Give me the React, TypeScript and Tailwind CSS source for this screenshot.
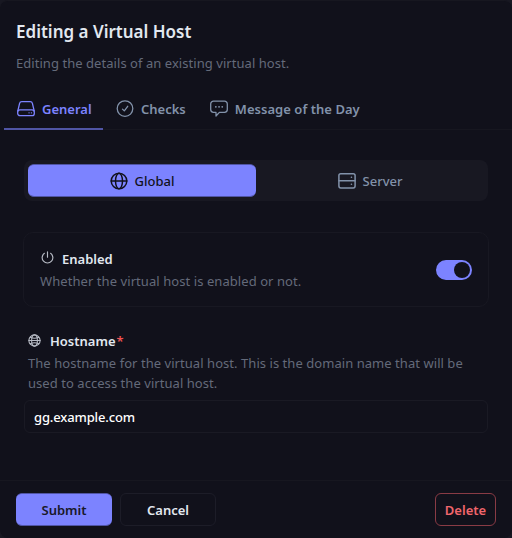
import { useState, type ReactNode } from "react";

type IconProps = { className?: string };

function Svg({ className = "", children, sw = 1.2 }: { className?: string; children: ReactNode; sw?: number }) {
  return (
    <svg viewBox="0 0 18 18" fill="none" stroke="currentColor" strokeWidth={sw} strokeLinecap="round" strokeLinejoin="round" className={`shrink-0 ${className}`}>
      {children}
    </svg>
  );
}

const DriveIcon = ({ className }: IconProps) => (
  <Svg className={className} sw={1.3}>
    <path d="M.8 11 2.6 3.4A2.3 2.3 0 0 1 4.8 1.6h8.4a2.3 2.3 0 0 1 2.2 1.8l1.8 7.6" />
    <rect x=".7" y="9.9" width="16.6" height="5.8" rx="2.2" />
    <path d="M12 12.8h.1M14.4 12.8h.1" />
  </Svg>
);

const CheckCircleIcon = ({ className }: IconProps) => (
  <Svg className={className} sw={1.3}>
    <circle cx="9" cy="8.6" r="7.8" />
    <path d="m6.5 9.1 1.8 1.8 3.4-4.6" />
  </Svg>
);

const MessageIcon = ({ className }: IconProps) => (
  <Svg className={className} sw={1.3}>
    <path d="M3.5 1.2h11a2.8 2.8 0 0 1 2.8 2.8v5.6a2.8 2.8 0 0 1-2.8 2.8H9.4L6 16v-3.6H3.5A2.8 2.8 0 0 1 .7 9.6V4a2.8 2.8 0 0 1 2.8-2.8Z" />
    <path d="M5.8 6.8h.1M9 6.8h.1M12.2 6.8h.1" strokeWidth="1.7" />
  </Svg>
);

const GlobeIcon = ({ className }: IconProps) => (
  <Svg className={className} sw={1.5}>
    <circle cx="9" cy="9" r="7.8" />
    <ellipse cx="9" cy="9" rx="3.5" ry="7.8" />
    <path d="M1.2 9h15.6" />
  </Svg>
);

const ServerIcon = ({ className }: IconProps) => (
  <Svg className={className} sw={1.5}>
    <rect x=".9" y="1.7" width="16.2" height="14.2" rx="1.8" />
    <path d="M1 8.8h16M13.4 5.3h.1M13.4 12.3h.1" />
  </Svg>
);

const PowerIcon = ({ className }: IconProps) => (
  <Svg className={className} sw={1.6}>
    <path d="M9 1.2V8.5M4.7 3.2a7.4 7.4 0 1 0 8.6 0" />
  </Svg>
);

const HostGlobeIcon = ({ className }: IconProps) => (
  <Svg className={className} sw={1.5}>
    <circle cx="9" cy="9" r="7.8" />
    <ellipse cx="9" cy="9" rx="4" ry="7.8" />
    <path d="M1.2 9h15.6M3 4.6c3.4 1.5 8.6 1.5 12 0M3 13.4c3.4-1.5 8.6-1.5 12 0" />
  </Svg>
);

export default function App() {
  const [enabled, setEnabled] = useState(true);
  const [host, setHost] = useState("gg.example.com");

  return (
    <div className="h-[538px] w-[512px] bg-[#181822] font-['Noto_Sans',sans-serif] text-[13px] leading-5 text-[#e2e8f0]">
      <div className="flex h-full flex-col overflow-hidden rounded-lg border-t border-[#171720] bg-[#11111b]">
        <header className="px-4 pt-[18px]">
          <h1 className="text-[17px] leading-[26px] font-semibold">Editing a Virtual Host</h1>
          <p className="mt-2 tracking-[0.05px] text-[#646a7a]">Editing the details of an existing virtual host.</p>
        </header>

        <nav className="mt-[15px] ml-1 flex h-[42px] border-b border-[#171720] font-semibold text-[#8292aa]">
          <button className="-mb-px flex w-[99px] items-center gap-[7px] border-b-2 border-[#5055a5] pt-px pl-[13px] text-[#7c83ff]">
            <DriveIcon className="size-[18px]" />
            <span>General</span>
          </button>
          <button className="flex items-center gap-[7px] pl-[13px]">
            <CheckCircleIcon className="size-[18px]" />
            <span>Checks</span>
          </button>
          <button className="flex items-center gap-[7px] pl-6">
            <MessageIcon className="size-[18px]" />
            <span className="tracking-[0.04px]">Message of the Day</span>
          </button>
        </nav>

        <main className="flex flex-1 flex-col px-6 pt-[30px]">
          <div className="grid h-[41px] grid-cols-2 rounded-lg bg-[#181822] p-1 font-medium">
            <button className="flex items-center justify-center gap-[7px] rounded-md border-y border-[#5055a5] bg-[#7c83ff] pt-px text-[#11111b]">
              <GlobeIcon className="size-[18px]" />
              <span>Global</span>
            </button>
            <button className="flex items-center justify-center gap-[7px] pt-px text-[#8292aa]">
              <ServerIcon className="size-[18px]" />
              <span>Server</span>
            </button>
          </div>

          <section className="-mx-px mt-[31px] flex h-[75px] items-center justify-between rounded-[10px] border border-[#181822] px-4">
            <div>
              <div className="flex items-center gap-2 font-semibold">
                <PowerIcon className="mb-0.5 ml-px size-[13px] text-[#b6bac4]" />
                <span>Enabled</span>
              </div>
              <p className="mt-[2px] tracking-[0.07px] text-[#646a7a]">Whether the virtual host is enabled or not.</p>
            </div>
            <button
              role="switch"
              aria-checked={enabled}
              onClick={() => setEnabled(!enabled)}
              className={`flex h-5 w-9 items-center rounded-full border-2 border-[#7c83ff] bg-[#7c83ff] ${enabled ? "justify-end" : ""}`}
            >
              <span className="size-4 rounded-full bg-[#11111b]" />
            </button>
          </section>

          <section className="mt-6">
            <div className="ml-1 flex items-center gap-[9px] font-semibold">
              <HostGlobeIcon className="mb-px size-[13px] text-[#b6bac4]" />
              <label htmlFor="host">Hostname<span className="ml-px text-[#f05252]">*</span></label>
            </div>
            <p className="mt-[2px] ml-1 tracking-[0.05px] text-[#646a7a]">
              The hostname for the virtual host. This is the domain name that will be
              <br />
              used to access the virtual host.
            </p>
            <input
              id="host"
              value={host}
              onChange={(e) => setHost(e.target.value)}
              className="mt-[7px] h-[33px] w-full rounded-md border border-[#1a1a24] bg-transparent px-[9px] font-medium tracking-[-0.14px] text-white outline-none"
            />
          </section>
        </main>

        <footer className="flex h-[58px] shrink-0 items-start gap-2 border-t border-[#171720] px-4 pt-3 font-semibold">
          <button className="h-[33px] w-24 rounded-md border-y border-[#5055a5] bg-[#7c83ff] text-[#181828]">Submit</button>
          <button className="h-[33px] w-24 rounded-md border border-[#1d1d28]">Cancel</button>
          <button className="ml-auto h-[33px] w-[61px] rounded-md border border-[#893b45] text-[#f0666c]">Delete</button>
        </footer>
      </div>
    </div>
  );
}
